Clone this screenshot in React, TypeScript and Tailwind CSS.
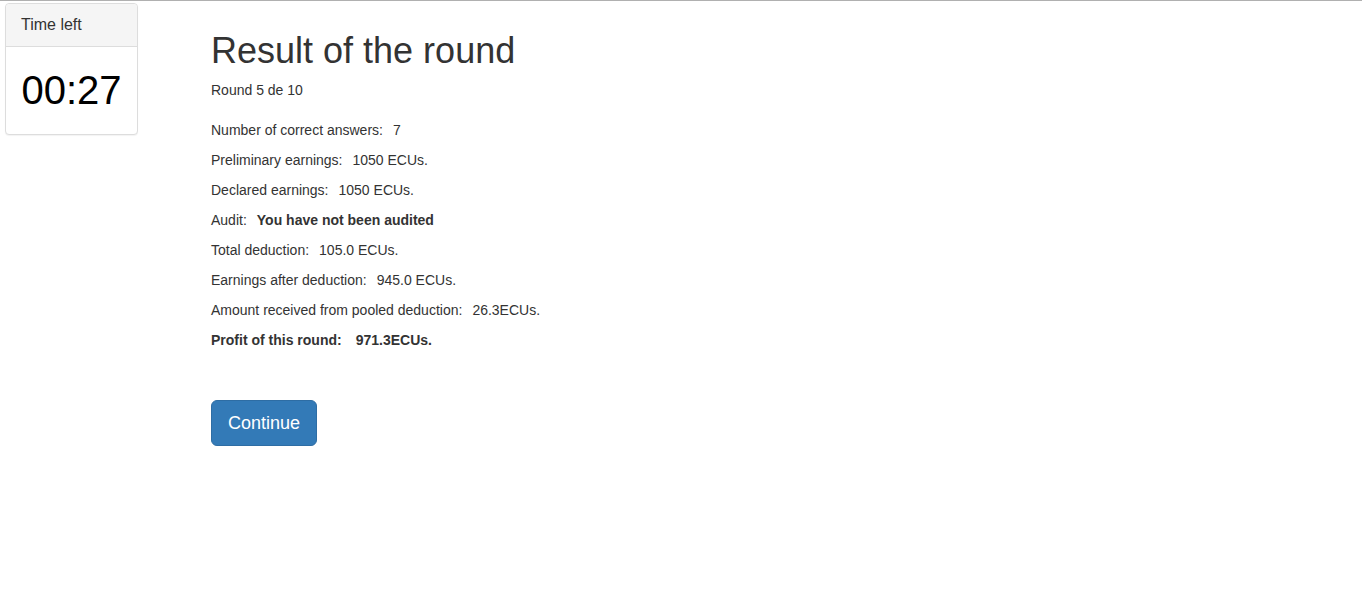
export default function App() {
  const rows: [string, string][] = [
    ['Number of correct answers:', '7'],
    ['Preliminary earnings:', '1050 ECUs.'],
    ['Declared earnings:', '1050 ECUs.'],
  ];
  const rows2: [string, string][] = [
    ['Total deduction:', '105.0 ECUs.'],
    ['Earnings after deduction:', '945.0 ECUs.'],
    ['Amount received from pooled deduction:', '26.3ECUs.'],
  ];

  return (
    <div className="min-h-[609px] bg-white border-t border-[#b0b0b0] font-['Liberation_Sans',Arial,sans-serif] text-sm leading-5 text-[#333]">
      <div className="flex items-start">
        {/* countdown panel */}
        <div className="ml-[5px] mt-[2px] w-[133px] rounded border border-[#ddd] bg-white shadow-[0_1px_1px_rgba(0,0,0,0.05)]">
          <div className="h-[43px] rounded-t border-b border-[#ddd] bg-[#f5f5f5] px-[15px] pt-[11px] text-base leading-5 text-[#333]">
            Time left
          </div>
          <div className="h-[87px] pt-[20px] text-center text-[40px] leading-[46px] text-black">
            00:27
          </div>
        </div>

        <div className="ml-[73px] mt-[30px]">
          <h1 className="text-[36px] leading-10 font-normal text-[#333]">Result of the round</h1>
          <p className="mt-[9px] mb-[20px]">Round 5 de 10</p>

          {rows.map(([label, value]) => (
            <p key={label} className="mb-[10px]">
              {label}
              <span className="pl-[10px]">{value}</span>
            </p>
          ))}
          <p className="mb-[10px]">
            Audit:<b className="pl-[10px]">You have not been audited</b>
          </p>
          {rows2.map(([label, value]) => (
            <p key={label} className="mb-[10px]">
              {label}
              <span className="pl-[10px]">{value}</span>
            </p>
          ))}
          <p className="font-bold">
            Profit of this round:<span className="pl-[14px]">971.3ECUs.</span>
          </p>

          <button className="mt-[50px] h-[46px] w-[106px] rounded-md border border-[#2e6da4] bg-[#337ab7] text-lg text-white">
            Continue
          </button>
        </div>
      </div>
    </div>
  );
}
